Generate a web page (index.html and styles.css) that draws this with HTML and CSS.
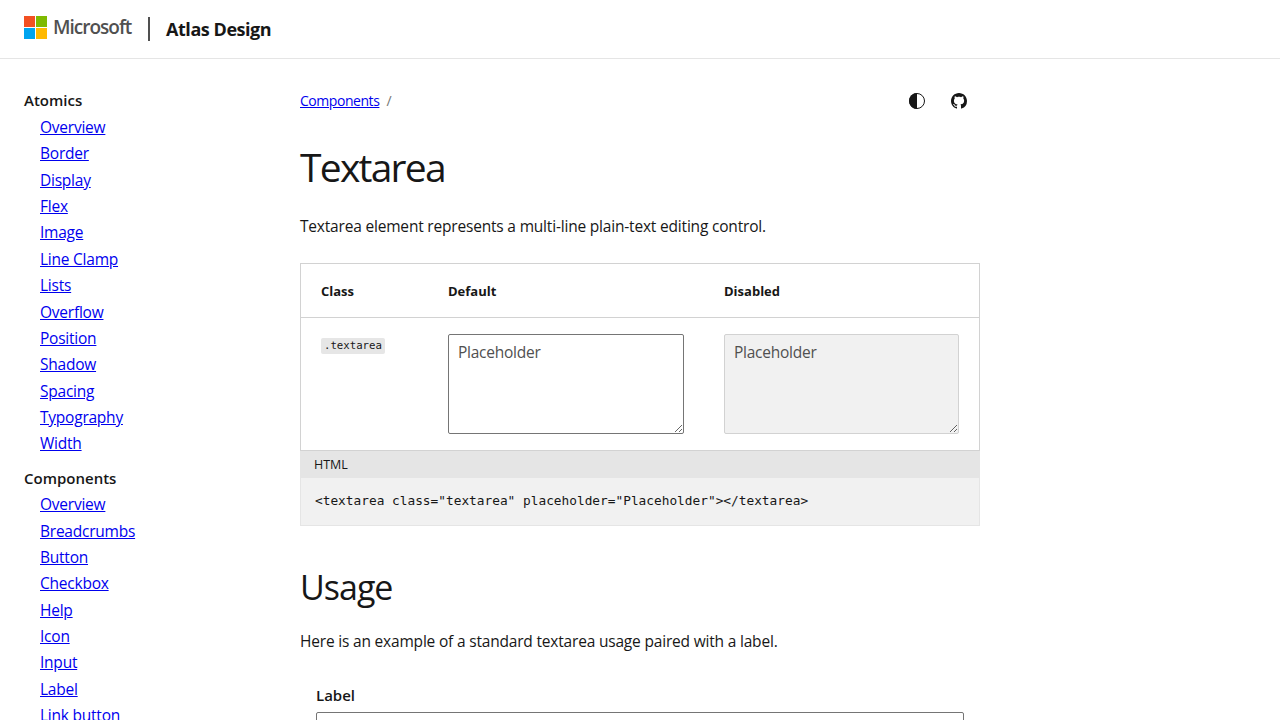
FILE: index.html
```html
<!DOCTYPE html>
<html lang="en">
<head>
<meta charset="utf-8">
<title>Textarea - Atlas Design</title>
<link rel="stylesheet" href="styles.css">
</head>
<body>
<header class="site-header">
  <a class="brand" aria-label="Microsoft">
    <svg width="23" height="23" viewBox="0 0 23 23"><path fill="#f25022" d="M0 0h11v11H0z"/><path fill="#7fba00" d="M12 0h11v11H12z"/><path fill="#00a4ef" d="M0 12h11v11H0z"/><path fill="#ffb900" d="M12 12h11v11H12z"/></svg>
    <span class="brand-name">Microsoft</span>
  </a>
  <span class="divider"></span>
  <span class="site-name">Atlas Design</span>
</header>
<div class="layout">
  <nav class="sidebar">
    <p class="nav-title">Atomics</p>
    <ul class="nav-list">
      <li><a href="#">Overview</a></li><li><a href="#">Border</a></li><li><a href="#">Display</a></li><li><a href="#">Flex</a></li><li><a href="#">Image</a></li><li><a href="#">Line Clamp</a></li><li><a href="#">Lists</a></li><li><a href="#">Overflow</a></li><li><a href="#">Position</a></li><li><a href="#">Shadow</a></li><li><a href="#">Spacing</a></li><li><a href="#">Typography</a></li><li><a href="#">Width</a></li>
    </ul>
    <p class="nav-title">Components</p>
    <ul class="nav-list">
      <li><a href="#">Overview</a></li><li><a href="#">Breadcrumbs</a></li><li><a href="#">Button</a></li><li><a href="#">Checkbox</a></li><li><a href="#">Help</a></li><li><a href="#">Icon</a></li><li><a href="#">Input</a></li><li><a href="#">Label</a></li><li><a href="#">Link button</a></li>
    </ul>
  </nav>
  <main class="content">
    <div class="toolbar">
      <div class="breadcrumbs"><a href="#">Components</a><span class="slash">/</span></div>
      <div class="actions">
        <svg width="16" height="16" viewBox="0 0 16 16"><circle cx="8" cy="8" r="7.5" fill="none" stroke="#171717"/><path fill="#171717" d="M8 0a8 8 0 0 0 0 16z"/></svg>
        <svg width="16" height="16" viewBox="0 0 16 16"><path fill="#171717" fill-rule="evenodd" d="M8 0C3.58 0 0 3.58 0 8c0 3.54 2.29 6.53 5.47 7.59.4.07.55-.17.55-.38 0-.19-.01-.82-.01-1.49-2.01.37-2.53-.49-2.69-.94-.09-.23-.48-.94-.82-1.13-.28-.15-.68-.52-.01-.53.63-.01 1.08.58 1.23.82.72 1.21 1.87.87 2.33.66.07-.52.28-.87.51-1.07-1.78-.2-3.64-.89-3.64-3.95 0-.87.31-1.59.82-2.15-.08-.2-.36-1.02.08-2.12 0 0 .67-.21 2.2.82.64-.18 1.32-.27 2-.27s1.36.09 2 .27c1.53-1.04 2.2-.82 2.2-.82.44 1.1.16 1.92.08 2.12.51.56.82 1.27.82 2.15 0 3.07-1.87 3.75-3.65 3.95.29.25.54.73.54 1.48 0 1.07-.01 1.93-.01 2.2 0 .21.15.46.55.38A8.01 8.01 0 0 0 16 8c0-4.42-3.58-8-8-8z"/></svg>
      </div>
    </div>
    <h1 class="title">Textarea</h1>
    <p class="text">Textarea element represents a multi-line plain-text editing control.</p>
    <div class="table">
      <div class="row head"><span>Class</span><span>Default</span><span>Disabled</span></div>
      <div class="row body">
        <div class="cell"><code class="inline-code">.textarea</code></div>
        <textarea class="textarea" placeholder="Placeholder"></textarea>
        <textarea class="textarea" placeholder="Placeholder" disabled></textarea>
      </div>
    </div>
    <div class="code-header">HTML</div>
    <pre class="code-block"><code>&lt;textarea class="textarea" placeholder="Placeholder"&gt;&lt;/textarea&gt;</code></pre>
    <h2 class="subtitle">Usage</h2>
    <p class="text usage">Here is an example of a standard textarea usage paired with a label.</p>
    <div class="example">
      <label class="label" for="demo">Label</label>
      <textarea class="textarea" id="demo"></textarea>
    </div>
  </main>
</div>
</body>
</html>
```
FILE: styles.css
```css
* { box-sizing: border-box; }
body {
  margin: 0;
  height: 100vh;
  overflow: hidden;
  background: #fff;
  color: #171717;
  font-family: "Open Sans", "Noto Sans", sans-serif;
  font-size: 16px;
  line-height: 26.4px;
}
p, h1, h2, ul, pre { margin: 0; padding: 0; }
a { color: #00e; }
.site-header {
  display: flex;
  align-items: flex-start;
  height: 59px;
  padding: 16px 24px 0;
  border-bottom: 1px solid #e5e5e5;
}
.brand { display: flex; gap: 6px; height: 23px; }
.brand-name { width: 79px; color: #505050; font-size: 19px; font-weight: 600; line-height: 23px; letter-spacing: -1px; }
.divider { width: 2px; height: 24px; margin: 1px 16px 0; background: #505050; }
.site-name { font-size: 18px; font-weight: 700; line-height: 26px; letter-spacing: -0.45px; }
.layout { display: flex; }
.sidebar { width: 300px; padding: 28px 24px 0; }
.nav-title { font-weight: 600; font-size: 15px; line-height: 27px; }
.nav-list { padding-left: 16px; margin-bottom: 8px; list-style: none; font-size: 15.5px; line-height: 26.36px; letter-spacing: -0.23px; }
.nav-title + .nav-list:last-child { margin-top: -0.5px; }
.content { width: 680px; padding-top: 24px; }
.toolbar { display: flex; justify-content: space-between; align-items: center; height: 36px; }
.breadcrumbs { font-size: 14px; letter-spacing: -0.45px; }
.slash { margin-left: 7px; color: #757575; }
.actions { display: flex; gap: 26px; padding-right: 13px; }
.title { margin-top: 22px; font-size: 39px; font-weight: 400; line-height: 52px; letter-spacing: -1.75px; }
.text { margin-top: 20px; height: 26px; font-size: 15.5px; letter-spacing: -0.19px; white-space: nowrap; }
.table { margin-top: 24px; border: 1px solid #d2d2d2; }
.row { display: grid; grid-template-columns: 87px 236px 235px; column-gap: 40px; padding: 0 20px; }
.head { height: 54px; align-items: center; padding-top: 1px; border-bottom: 1px solid #d2d2d2; font-size: 13px; font-weight: 700; }
.body { height: 132px; padding-top: 16px; }
.cell { display: flex; align-items: flex-start; padding-top: 4px; }
.inline-code { padding: 0 3px; border-radius: 2px; background: #e6e6e6; font: 10.7px/16px "DejaVu Sans Mono", monospace; }
.textarea {
  display: block;
  width: 100%;
  height: 100px;
  padding: 4px 9px;
  border: 1px solid #757575;
  border-radius: 2px;
  background: #fff;
  font: 15.5px/26px "Open Sans", sans-serif;
  letter-spacing: -0.25px;
  resize: both;
}
.textarea::placeholder { color: #505050; }
.textarea:disabled { border-color: #d2d2d2; background: #f1f1f1; }
.code-header { height: 27px; padding-left: 14px; background: #e5e5e5; font-size: 12.5px; line-height: 27px; }
.code-block { height: 48px; padding: 10px 14px; border: 1px solid #e5e5e5; border-top: 0; background: #f1f1f1; font: 12.8px/26px "DejaVu Sans Mono", monospace; }
.code-block code { font: inherit; }
.subtitle { margin-top: 39px; font-size: 34px; font-weight: 400; line-height: 44px; letter-spacing: -1px; }
.usage { margin-top: 19px; }
.example { padding: 28px 16px 0; }
.label { display: block; font-size: 15px; font-weight: 600; line-height: 26px; margin-bottom: 4px; }
```
